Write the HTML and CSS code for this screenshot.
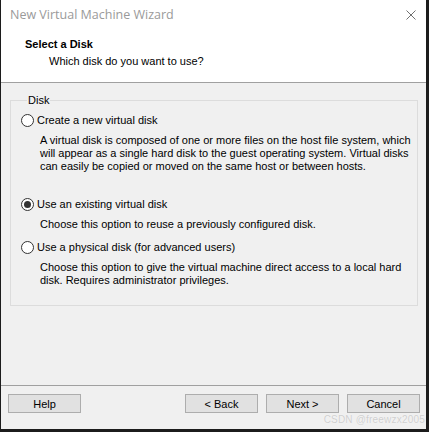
FILE: index.html
```html
<!DOCTYPE html>
<html>
<head>
<meta charset="utf-8">
<link rel="stylesheet" href="styles.css">
</head>
<body>
<div class="window">
  <div class="titlebar">
    <span class="title">New Virtual Machine Wizard</span>
    <svg class="close" width="10" height="10" viewBox="0 0 10 10"><path d="M0.5 0.5 L9.5 9.5 M9.5 0.5 L0.5 9.5" stroke="#707070" stroke-width="1" fill="none"/></svg>
  </div>
  <div class="header">
    <div class="h-title">Select a Disk</div>
    <div class="h-sub">Which disk do you want to use?</div>
  </div>
  <div class="content">
    <fieldset class="group">
      <legend>Disk</legend>
      <div class="option opt1">
        <div class="radio-row"><span class="radio"></span><span>Create a new virtual disk</span></div>
        <div class="desc">A virtual disk is composed of one or more files on the host file system, which<br>will appear as a single hard disk to the guest operating system. Virtual disks<br>can easily be copied or moved on the same host or between hosts.</div>
      </div>
      <div class="option opt2">
        <div class="radio-row"><span class="radio checked"></span><span>Use an existing virtual disk</span></div>
        <div class="desc">Choose this option to reuse a previously configured disk.</div>
      </div>
      <div class="option">
        <div class="radio-row"><span class="radio"></span><span>Use a physical disk (for advanced users)</span></div>
        <div class="desc">Choose this option to give the virtual machine direct access to a local hard<br>disk. Requires administrator privileges.</div>
      </div>
    </fieldset>
  </div>
  <div class="footer">
    <button class="btn">Help</button>
    <div class="spacer"></div>
    <button class="btn">&lt; Back</button>
    <button class="btn">Next &gt;</button>
    <button class="btn">Cancel</button>
    <span class="watermark">CSDN @freewzx2005</span>
  </div>
</div>
</body>
</html>
```

FILE: styles.css
```css
html, body {
  margin: 0;
  padding: 0;
}
body {
  width: 429px;
  height: 432px;
  background: #1c1c1c;
  overflow: hidden;
  font-family: "Liberation Sans", Arial, sans-serif;
  font-size: 11px;
  color: #000;
}
.window {
  margin-left: 1px;
  width: 425px;
  height: 429px;
  background: #f0f0f0;
  display: flex;
  flex-direction: column;
  position: relative;
}
.titlebar {
  height: 30px;
  background: #fff;
  display: flex;
  align-items: center;
  padding-left: 9px;
  padding-right: 10px;
}
.title {
  flex: 1;
  font-family: "Open Sans", "Noto Sans", sans-serif;
  font-size: 12.5px;
  color: #9a9a9a;
  line-height: 16px;
}
.close {
  display: block;
}
.header {
  background: #fff;
  padding: 7px 0 14px 24px;
  border-bottom: 1px solid #a0a0a0;
  height: 31px;
}
.h-title {
  font-weight: bold;
  line-height: 14px;
}
.h-sub {
  line-height: 14px;
  margin-top: 3px;
  padding-left: 24px;
}
.content {
  flex: 1;
  padding: 11px 8px 0 9px;
}
.group {
  margin: 0;
  border: 1px solid #dcdcdc;
  padding: 7px 6px 18px 10px;
  min-width: 0;
}
.group legend {
  padding: 0 1px;
  margin-left: 6px;
  line-height: 13px;
}
.radio-row {
  display: flex;
  align-items: center;
  height: 13px;
  line-height: 13px;
}
.radio {
  width: 11px;
  height: 11px;
  border: 1px solid #333;
  border-radius: 50%;
  background: #fff;
  margin-right: 3px;
  display: flex;
  align-items: center;
  justify-content: center;
  flex: none;
}
.radio.checked::after {
  content: "";
  width: 7px;
  height: 7px;
  border-radius: 50%;
  background: #333;
}
.desc {
  margin-top: 7px;
  padding-left: 19px;
  line-height: 13px;
  white-space: nowrap;
}
.opt1 {
  margin-bottom: 25px;
}
.opt2 {
  margin-bottom: 10px;
}
.footer {
  border-top: 1px solid #a0a0a0;
  height: 35px;
  display: flex;
  align-items: flex-start;
  padding: 8px 6px 0 7px;
  gap: 8px;
  position: relative;
}
.spacer {
  flex: 1;
}
.btn {
  width: 73px;
  height: 19px;
  background: #e1e1e1;
  border: 1px solid #adadad;
  font-family: "Liberation Sans", Arial, sans-serif;
  font-size: 11px;
  color: #000;
  padding: 0;
  margin: 0;
  border-radius: 0;
}
.watermark {
  position: absolute;
  right: 1px;
  bottom: 4px;
  line-height: 10px;
  font-family: "Liberation Sans", Arial, sans-serif;
  font-size: 10px;
  color: #cfcfcf;
  letter-spacing: 0.2px;
  text-shadow: 0 0 1px #fff;
}
```
